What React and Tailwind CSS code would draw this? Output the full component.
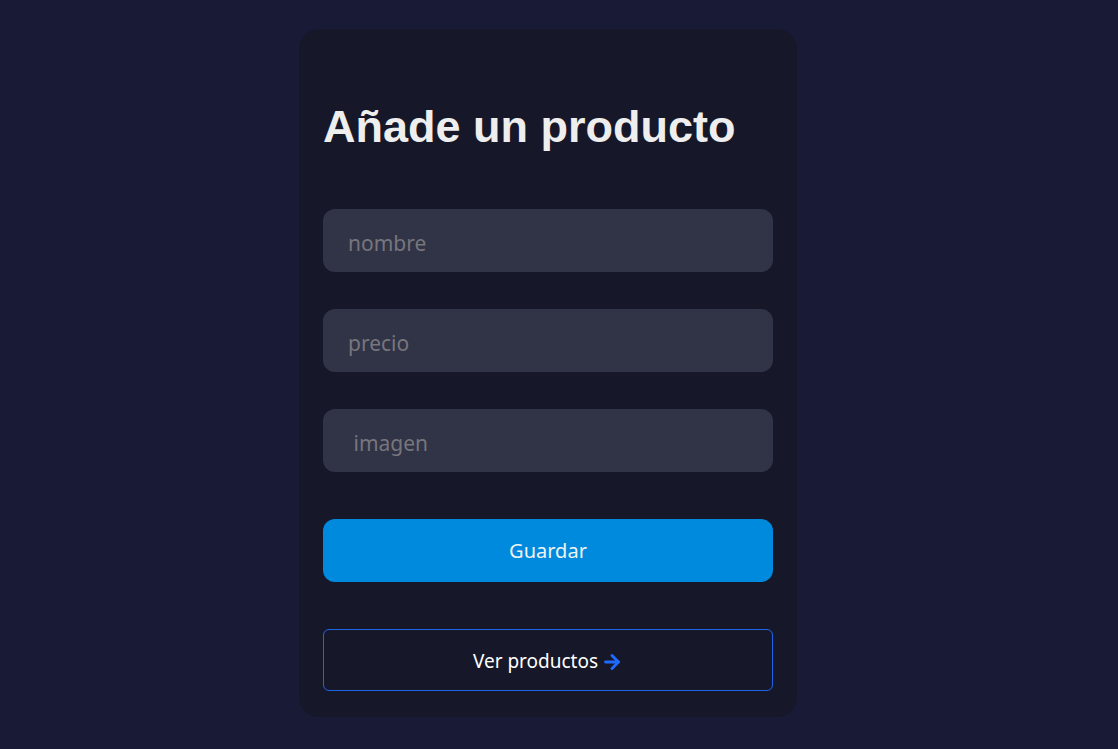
import { ArrowRight } from 'lucide-react';

const fields = [
    { name: 'nombre', placeholder: 'nombre' },
    { name: 'precio', placeholder: 'precio' },
    { name: 'imagen', placeholder: ' imagen' },
];

const App = () => {
    return (
        <div className="min-h-screen bg-[#181a36] flex justify-center pt-[29px] pr-[22px] font-['Noto_Sans',sans-serif]">
            <div className="w-[498px] h-[688px] bg-[#161829] rounded-[20px] px-6 pt-[71px]">
                <h1 className="font-['Liberation_Sans',Arial,sans-serif] font-bold text-[45px] leading-[53px] text-[#eeeeee]">
                    Añade un producto
                </h1>

                <form className="mt-[56px] flex flex-col" onSubmit={e => e.preventDefault()}>
                    {fields.map(field => (
                        <input
                            key={field.name}
                            name={field.name}
                            placeholder={field.placeholder}
                            className="h-[63px] mb-[37px] rounded-xl bg-[#313347] px-[25px] pt-[4px] text-[21px] text-white placeholder:text-[#76767c] outline-none"
                        />
                    ))}
                    <button
                        type="submit"
                        className="mt-[10px] h-[63px] rounded-xl bg-[#008ade] text-[20px] text-[#f2f2f2]"
                    >
                        Guardar
                    </button>
                </form>

                <a
                    href="#"
                    className="mt-[47px] h-[62px] flex items-center justify-center gap-[3px] pt-[3px] rounded-md border border-[#1f64e6] text-[19px] text-white"
                >
                    Ver productos
                    <ArrowRight size={22} strokeWidth={3.2} className="text-[#1e6bff]" />
                </a>
            </div>
        </div>
    );
};

export default App;
